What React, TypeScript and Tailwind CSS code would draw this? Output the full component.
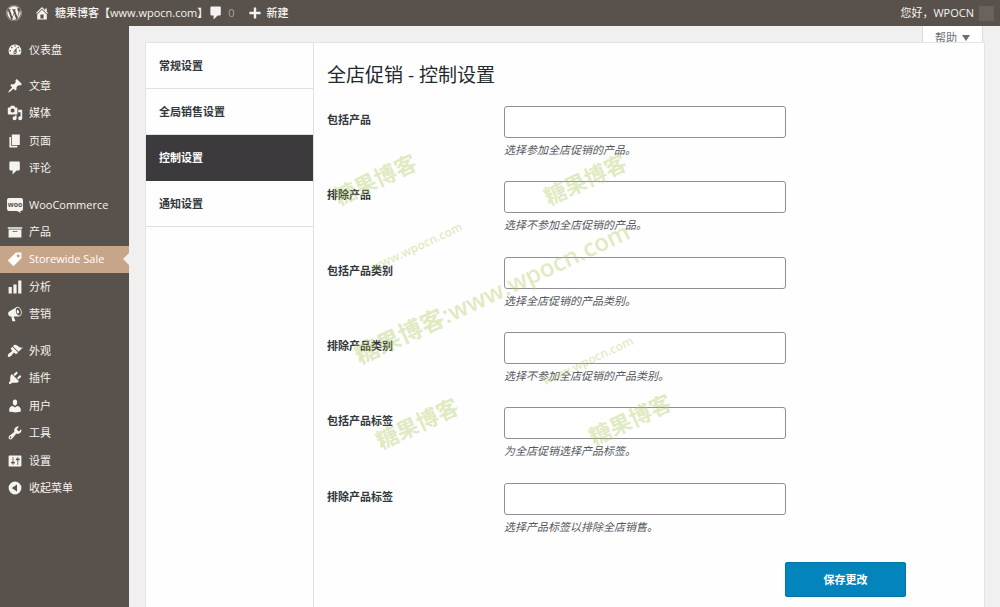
import type { ReactNode } from 'react';
import { FaWordpress } from 'react-icons/fa';

const paths = {
  dashboard:
    'M3.76 16h12.48c1.1-1.37 1.76-3.11 1.76-5 0-4.42-3.58-8-8-8s-8 3.58-8 8c0 1.89.66 3.63 1.76 5zM10 4c.55 0 1 .45 1 1s-.45 1-1 1-1-.45-1-1 .45-1 1-1zM6 6c.55 0 1 .45 1 1s-.45 1-1 1-1-.45-1-1 .45-1 1-1zm8 0c.55 0 1 .45 1 1s-.45 1-1 1-1-.45-1-1 .45-1 1-1zm-5.37 5.55L12 7v6c0 1.1-.9 2-2 2s-2-.9-2-2c0-.57.24-1.08.63-1.45zM4 10c.55 0 1 .45 1 1s-.45 1-1 1-1-.45-1-1 .45-1 1-1zm12 0c.55 0 1 .45 1 1s-.45 1-1 1-1-.45-1-1 .45-1 1-1zm-5 3c0-.55-.45-1-1-1s-1 .45-1 1 .45 1 1 1 1-.45 1-1z',
  pin: 'M10.44 3.02l1.82-1.82 6.36 6.35-1.83 1.82c-1.05-.68-2.48-.57-3.41.36l-.75.75c-.92.93-1.04 2.35-.35 3.41l-1.83 1.82-2.41-2.41-2.8 2.79c-.42.42-3.38 2.71-3.8 2.29s1.86-3.39 2.28-3.81l2.79-2.79L4.1 9.36l1.83-1.82c1.05.69 2.48.57 3.4-.36l.75-.75c.93-.92 1.05-2.35.36-3.41z',
  media:
    'M13 11V4c0-.55-.45-1-1-1h-1.67L9 1H5L3.67 3H2c-.55 0-1 .45-1 1v7c0 .55.45 1 1 1h10c.55 0 1-.45 1-1zM7 4.5c1.38 0 2.5 1.12 2.5 2.5S8.38 9.5 7 9.5 4.5 8.38 4.5 7 5.62 4.5 7 4.5zM14 6h5v10.5c0 1.38-1.12 2.5-2.5 2.5S14 17.88 14 16.5s1.12-2.5 2.5-2.5c.17 0 .34.02.5.05V9h-3V6zm-4 8.05V13h2v3.5c0 1.38-1.12 2.5-2.5 2.5S7 17.88 7 16.5 8.12 14 9.5 14c.17 0 .34.02.5.05z',
  page: 'M6 15V2h10v13H6zm-1 1h8v2H3V5h2v11z',
  comment: 'M4 2h11c.55 0 1 .45 1 1v9c0 .55-.45 1-1 1h-3l-5 5v-5H4c-.55 0-1-.45-1-1V3c0-.55.45-1 1-1z',
  archive: 'M19 4v2H1V4h18zM2 7h16v10H2V7zm11 3V9H7v1h6z',
  tag: 'M11 2h7v7L8 19l-7-7zm3 6c1.1 0 2-.9 2-2s-.9-2-2-2-2 .9-2 2 .9 2 2 2z',
  chart: 'M18 18V2h-4v16h4zm-6 0V7H8v11h4zm-6 0v-8H2v8h4z',
  megaphone:
    'M18.15 5.94c.46 1.62.38 3.22-.02 4.48-.42 1.28-1.26 2.18-2.3 2.48-.16.06-.26.06-.4.06-.06.02-.12.02-.18.02-.06.02-.14.02-.22.02h-6.8l2.22 5.5c.02.14-.06.26-.14.34-.08.1-.24.16-.34.16H6.95c-.1 0-.26-.06-.34-.16-.08-.08-.16-.2-.14-.34l-1-5.5H4.25l-.02-.02c-.5.06-1.08-.18-1.54-.62s-.88-1.08-1.06-1.88c-.24-.8-.2-1.56-.02-2.2.18-.62.58-1.08 1.06-1.3l.02-.02 9-5.4c.1-.06.18-.1.24-.16.06-.04.14-.08.24-.12.16-.08.28-.12.5-.18 1.04-.3 2.24.1 3.22.98s1.84 2.24 2.26 3.86zm-2.58 5.98h-.02c.4-.1.74-.34 1.04-.7.58-.7.86-1.76.86-3.04 0-.64-.1-1.3-.28-1.98-.34-1.36-1.02-2.5-1.78-3.24s-1.68-1.1-2.46-.88c-.82.22-1.4.96-1.7 2-.32 1.04-.28 2.36.06 3.72.38 1.36 1 2.5 1.8 3.24.78.74 1.62 1.1 2.48.88zm-2.54-7.08c.22-.04.42-.02.62.04.38.16.76.48 1.02 1s.42 1.2.42 1.78c0 .3-.04.56-.12.8-.18.48-.44.84-.86.94-.34.1-.8-.06-1.14-.4s-.64-.86-.78-1.5c-.18-.62-.12-1.24.02-1.72s.48-.84.82-.94z',
  brush:
    'M14.48 11.06L7.41 3.99l1.5-1.5c.5-.56 2.3-.47 3.51.32 1.21.8 1.43 1.28 2.91 2.1 1.18.64 2.45 1.26 4.45.85zm-.71.71L6.7 4.7 4.93 6.47c-.39.39-.39 1.02 0 1.41l1.06 1.06c.39.39.39 1.03 0 1.42-.6.6-1.43 1.11-2.21 1.69-.35.26-.7.53-1.01.84C1.43 14.23.4 16.08 1.4 17.07c.99 1 2.84-.03 4.18-1.36.31-.31.58-.66.85-1.02.57-.78 1.08-1.61 1.69-2.21.39-.39 1.02-.39 1.41 0l1.06 1.06c.39.39 1.02.39 1.41 0z',
  plug: 'M13.11 4.36L9.87 7.6 8 5.73l3.24-3.24c.35-.34 1.05-.2 1.56.32.52.51.66 1.21.31 1.55zm-8 1.77l.91-1.12 9.01 9.01-1.19.84c-.71.71-2.63 1.16-3.82 1.16H6.14L4.9 17.26c-.59.59-1.54.59-2.12 0-.59-.58-.59-1.53 0-2.12l1.24-1.24v-3.88c0-1.13.4-3.19 1.09-3.89zm7.26 3.97l3.24-3.24c.34-.35 1.04-.21 1.55.31.52.51.66 1.21.31 1.55l-3.24 3.25z',
  user: 'M10 9.25c-2.27 0-2.73-3.44-2.73-3.44C7 4.02 7.82 2 9.97 2c2.16 0 2.98 2.02 2.71 3.81 0 0-.41 3.44-2.68 3.44zm0 2.57L12.72 10c2.39 0 4.52 2.33 4.52 4.53v2.49s-3.65 1.13-7.24 1.13c-3.65 0-7.24-1.13-7.24-1.13v-2.49c0-2.25 1.94-4.48 4.47-4.48z',
  wrench:
    'M16.68 9.77c-1.34 1.34-3.3 1.67-4.95.99l-5.41 6.52c-.99.99-2.59.99-3.58 0s-.99-2.59 0-3.57l6.52-5.42c-.68-1.65-.35-3.61.99-4.95 1.28-1.28 3.12-1.62 4.72-1.06l-2.89 2.89 2.82 2.82 2.86-2.87c.53 1.58.18 3.39-1.08 4.65zM3.81 16.21c.4.39 1.04.39 1.43 0 .4-.4.4-1.04 0-1.43-.39-.4-1.03-.4-1.43 0-.39.39-.39 1.03 0 1.43z',
  settings:
    'M18 16V4c0-.55-.45-1-1-1H3c-.55 0-1 .45-1 1v12c0 .55.45 1 1 1h14c.55 0 1-.45 1-1zM8 11h1c.55 0 1 .45 1 1s-.45 1-1 1H8v1.5c0 .28-.22.5-.5.5s-.5-.22-.5-.5V13H6c-.55 0-1-.45-1-1s.45-1 1-1h1V5.5c0-.28.22-.5.5-.5s.5.22.5.5V11zm5-2h-1c-.55 0-1-.45-1-1s.45-1 1-1h1V5.5c0-.28.22-.5.5-.5s.5.22.5.5V7h1c.55 0 1 .45 1 1s-.45 1-1 1h-1v5.5c0 .28-.22.5-.5.5s-.5-.22-.5-.5V9z',
  collapse: 'M10 2a8 8 0 1 0 0 16 8 8 0 0 0 0-16zM12.5 5.5v9L6 10z',
  home: 'M16 8.5l1.53 1.53-1.06 1.06L10 4.6l-6.47 6.49-1.06-1.06L10 2.5l4 4v-2h2v4zm-6-2.46l6 5.99V18H4v-5.97zM12 17v-5H8v5h4z',
  plus: 'M17 8.5v3h-5.5V17h-3v-5.5H3v-3h5.5V3h3v5.5z',
};

type IconName = keyof typeof paths;

function Icon({ name }: { name: IconName }) {
  return (
    <svg viewBox="0 0 20 20" className="size-4 shrink-0" fill="currentColor" fillRule="evenodd" aria-hidden="true">
      <path d={paths[name]} />
    </svg>
  );
}

function WooIcon() {
  return (
    <svg viewBox="0 0 16 16" className="size-4 shrink-0" fill="currentColor" aria-hidden="true">
      <path d="M2 1h12a2 2 0 0 1 2 2v9a2 2 0 0 1-2 2h-1l1 2-4-2H2a2 2 0 0 1-2-2V3a2 2 0 0 1 2-2z" />
      <text x="8" y="10" textAnchor="middle" fontSize="7" fontWeight="700" fill="#59524c">
        woo
      </text>
    </svg>
  );
}

type MenuItem = { label: string; icon: IconName | 'woo'; active?: boolean };

const postMenu: MenuItem[] = [
  { label: '文章', icon: 'pin' },
  { label: '媒体', icon: 'media' },
  { label: '页面', icon: 'page' },
  { label: '评论', icon: 'comment' },
];

const shopMenu: MenuItem[] = [
  { label: 'WooCommerce', icon: 'woo' },
  { label: '产品', icon: 'archive' },
  { label: 'Storewide Sale', icon: 'tag', active: true },
  { label: '分析', icon: 'chart' },
  { label: '营销', icon: 'megaphone' },
];

const siteMenu: MenuItem[] = [
  { label: '外观', icon: 'brush' },
  { label: '插件', icon: 'plug' },
  { label: '用户', icon: 'user' },
  { label: '工具', icon: 'wrench' },
  { label: '设置', icon: 'settings' },
];

const tabs = ['常规设置', '全局销售设置', '控制设置', '通知设置'];

const fields = [
  { id: 'include-products', label: '包括产品', help: '选择参加全店促销的产品。' },
  { id: 'exclude-products', label: '排除产品', help: '选择不参加全店促销的产品。' },
  { id: 'include-cats', label: '包括产品类别', help: '选择全店促销的产品类别。' },
  { id: 'exclude-cats', label: '排除产品类别', help: '选择不参加全店促销的产品类别。' },
  { id: 'include-tags', label: '包括产品标签', help: '为全店促销选择产品标签。' },
  { id: 'exclude-tags', label: '排除产品标签', help: '选择产品标签以排除全店销售。' },
];

function MenuLink({ item }: { item: MenuItem }) {
  return (
    <li className="grid">
      <a
        href="#"
        className={
          item.active
            ? 'relative flex items-center gap-[6px] bg-[#c7a589] px-[7px] text-white'
            : 'flex items-center gap-[6px] px-[7px] text-[#f5f3f0]'
        }
      >
        {item.icon === 'woo' ? <WooIcon /> : <Icon name={item.icon} />}
        {item.label}
        {item.active && (
          <span className="absolute right-0 top-1/2 -translate-y-1/2 border-y-[6px] border-r-[6px] border-y-transparent border-r-[#f0f0f0]" />
        )}
      </a>
    </li>
  );
}

function Mark({ className, children }: { className: string; children: ReactNode }) {
  return (
    <span className={`absolute -translate-x-1/2 -translate-y-1/2 -rotate-25 whitespace-nowrap font-semibold leading-none ${className}`}>
      {children}
    </span>
  );
}

function Watermark() {
  return (
    <div className="pointer-events-none absolute inset-0 overflow-hidden text-[#afca60]/40" aria-hidden="true">
      <Mark className="left-[375px] top-[179px] text-[22px]">糖果博客</Mark>
      <Mark className="left-[585px] top-[179px] text-[22px]">糖果博客</Mark>
      <Mark className="left-[417px] top-[423px] text-[22px]">糖果博客</Mark>
      <Mark className="left-[630px] top-[419px] text-[22px]">糖果博客</Mark>
      <Mark className="left-[417px] top-[247px] text-[12px]">www.wpocn.com</Mark>
      <Mark className="left-[588px] top-[361px] text-[12px]">www.wpocn.com</Mark>
      <Mark className="left-[492px] top-[293px] text-[24px]">糖果博客:www.wpocn.com</Mark>
    </div>
  );
}

export default function App() {
  return (
    <div
      lang="zh-CN"
      className="relative flex min-h-screen flex-col bg-[#f0f0f0] font-['Open_Sans','Noto_Sans_CJK_SC',sans-serif] text-[11px] leading-4 text-[#32373c]"
    >
      <header className="flex h-[26px] items-center bg-[#59524c] px-[6px] text-[#f5f3f0]">
        <a href="#" aria-label="WordPress">
          <FaWordpress className="size-4" />
        </a>
        <a href="#" className="ml-3 flex items-center gap-[5px] font-medium">
          <Icon name="home" />
          糖果博客【www.wpocn.com】
        </a>
        <a href="#" className="flex items-center gap-1">
          <Icon name="comment" />
          <span className="text-[#a8a39e]">0</span>
        </a>
        <a href="#" className="ml-3 flex items-center gap-1 font-medium">
          <Icon name="plus" />
          新建
        </a>
        <a href="#" className="ml-auto flex items-center gap-[5px]">
          您好，WPOCN
          <span className="size-[15px] bg-[#6b625d]" />
        </a>
      </header>

      <div className="flex flex-1">
        <nav className="flex w-[129px] shrink-0 flex-col gap-[9px] bg-[#59524c] pt-[10px]">
          <ul className="grid h-[27px]">
            <MenuLink item={{ label: '仪表盘', icon: 'dashboard' }} />
          </ul>
          <ul className="grid h-[110px] auto-rows-fr">
            {postMenu.map((item) => (
              <MenuLink key={item.label} item={item} />
            ))}
          </ul>
          <ul className="grid h-[137px] auto-rows-fr">
            {shopMenu.map((item) => (
              <MenuLink key={item.label} item={item} />
            ))}
          </ul>
          <ul className="grid h-[165px] auto-rows-fr">
            {siteMenu.map((item) => (
              <MenuLink key={item.label} item={item} />
            ))}
            <li className="grid">
              <button type="button" className="flex items-center gap-[6px] px-[7px] text-[#f5f3f0]">
                <Icon name="collapse" />
                收起菜单
              </button>
            </li>
          </ul>
        </nav>

        <main className="flex min-w-0 flex-1 flex-col pl-4 pr-[15px]">
          <button
            type="button"
            className="mr-[2px] flex h-4 items-center gap-[5px] self-end border-x border-[#dcdcdc] bg-[#fefefe] px-3 pt-[7px] text-[#6c7075]"
          >
            帮助
            <span className="border-x-4 border-t-[6px] border-x-transparent border-t-[#6c7075]" />
          </button>

          <div className="flex flex-1 border border-b-0 border-[#e4e4e6] bg-[#fefefe]">
            <div className="w-[168px] shrink-0 border-r border-[#e0e0e4]">
              {tabs.map((tab) => (
                <a
                  key={tab}
                  href="#"
                  className={
                    tab === '控制设置'
                      ? 'flex h-[46px] items-center bg-[#3c3a3c] px-[13px] font-semibold text-white'
                      : 'flex h-[46px] items-center border-b border-[#e0e0e4] px-[13px] font-semibold'
                  }
                >
                  {tab}
                </a>
              ))}
            </div>

            <form className="min-w-0 flex-1 pb-[9px] pl-[13px] pt-5">
              <h1 className="text-[19px] leading-6 text-[#23282d]">全店促销 - 控制设置</h1>
              <div className="mt-[19px] grid h-[452px] auto-rows-fr">
                {fields.map((field) => (
                  <div key={field.id} className="grid grid-cols-[177px_1fr]">
                    <label htmlFor={field.id} className="pt-[6px] font-semibold text-[#32373c]">
                      {field.label}
                    </label>
                    <div>
                      <input
                        id={field.id}
                        type="text"
                        className="block h-8 w-[282px] max-w-full rounded-[3px] border border-[#8f8d96] bg-white px-2"
                      />
                      <p className="mt-1 italic text-[#55595e]">{field.help}</p>
                    </div>
                  </div>
                ))}
              </div>
              <div className="mt-1 flex w-[579px] max-w-full justify-end">
                <button
                  type="submit"
                  className="h-[35px] w-[121px] rounded-[2px] border border-[#0073aa] bg-[#0484bd] font-semibold text-white"
                >
                  保存更改
                </button>
              </div>
            </form>
          </div>
        </main>
      </div>

      <Watermark />
    </div>
  );
}
